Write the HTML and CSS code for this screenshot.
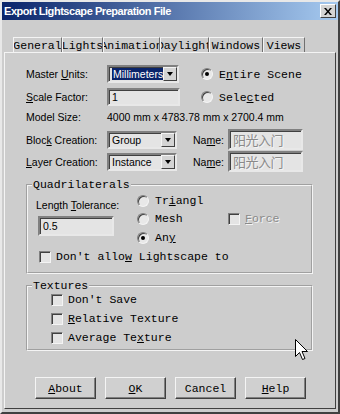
FILE: index.html
```html
<!DOCTYPE html>
<html lang="en">
<head>
    <meta charset="UTF-8">
    <meta name="viewport" content="width=device-width, initial-scale=1.0">
    <title>Export Lightscape Preparation File</title>
    <link rel="stylesheet" href="styles.css">
</head>
<body>
    <div class="window">
        <div class="titlebar">
            <span class="title">Export Lightscape Preparation File</span>
            <span class="close">
                <svg width="8" height="7" viewBox="0 0 8 7"><path d="M0 0h2l2 2.5L6 0h2L5 3.5 8 7H6L4 4.5 2 7H0l3-3.5z" fill="#000"/></svg>
            </span>
        </div>

        <div class="tabs">
            <div class="tab" style="width:49px">General</div>
            <div class="tab" style="width:41px">Lights</div>
            <div class="tab" style="width:57px">Animation</div>
            <div class="tab" style="width:49px">Daylight</div>
            <div class="tab" style="width:54px">Windows</div>
            <div class="tab" style="width:42px">Views</div>
        </div>

        <div class="panel">
            <div class="row r1">
                <span class="lbl">Master <u>U</u>nits:</span>
                <div class="combo w72">
                    <span class="val"><span class="hilite">Millimeters</span></span>
                    <span class="drop"></span>
                </div>
                <span class="radio on gap22"></span>
                <span class="mono">E<u>n</u>tire Scene</span>
            </div>
            <div class="row r2">
                <span class="lbl"><u>S</u>cale Factor:</span>
                <div class="field w73">1</div>
                <span class="radio gap21"></span>
                <span class="mono">Sele<u>c</u>ted</span>
            </div>
            <div class="row r3">
                <span class="lbl">Model Size:</span>
                <span class="sans">4000 mm x 4783.78 mm x 2700.4 mm</span>
            </div>
            <div class="row r4">
                <span class="lbl">Bloc<u>k</u> Creation:</span>
                <div class="combo w70">
                    <span class="val">Group</span>
                    <span class="drop"></span>
                </div>
                <span class="name-lbl">Na<u>m</u>e:</span>
                <div class="field name">阳光入门</div>
            </div>
            <div class="row r5">
                <span class="lbl"><u>L</u>ayer Creation:</span>
                <div class="combo w70">
                    <span class="val">Instance</span>
                    <span class="drop"></span>
                </div>
                <span class="name-lbl">Na<u>m</u>e:</span>
                <div class="field name">阳光入门</div>
            </div>

            <fieldset class="group quad">
                <legend class="mono">Quadrilaterals</legend>
                <div class="quad-body">
                    <span class="sans tol">Length <u>T</u>olerance:</span>
                    <div class="opt c2 ra"><span class="radio"></span><span class="mono">Tr<u>i</u>angl</span></div>
                    <div class="field tol-field">0.5</div>
                    <div class="opt c2 rb"><span class="radio"></span><span class="mono">Mesh</span></div>
                    <div class="opt c3 rb"><span class="check"></span><span class="mono disabled"><u>F</u>orce</span></div>
                    <div class="opt c2 rc"><span class="radio on"></span><span class="mono">An<u>y</u></span></div>
                    <div class="opt full rd"><span class="check"></span><span class="mono">Don't allo<u>w</u> Lightscape to</span></div>
                </div>
            </fieldset>

            <fieldset class="group tex">
                <legend class="mono">Textures</legend>
                <div class="tex-body">
                    <div class="opt"><span class="check"></span><span class="mono">Don't Save</span></div>
                    <div class="opt"><span class="check"></span><span class="mono"><u>R</u>elative Texture</span></div>
                    <div class="opt"><span class="check"></span><span class="mono">Average Te<u>x</u>ture</span></div>
                </div>
            </fieldset>

            <div class="buttons">
                <button class="btn"><u>A</u>bout</button>
                <button class="btn"><u>O</u>K</button>
                <button class="btn">Cancel</button>
                <button class="btn"><u>H</u>elp</button>
            </div>
        </div>

        <svg class="cursor" width="13" height="22" viewBox="0 0 13 22">
            <path d="M0.5 0.5v17l4-4 3 7 2.5-1-3-7h5.5z" fill="#fff" stroke="#000" stroke-width="1"/>
        </svg>
    </div>
</body>
</html>
```

FILE: styles.css
```css
body {
    margin: 0;
    background: #cdcdcd;
}
.window {
    position: relative;
    width: 340px;
    height: 414px;
    box-sizing: border-box;
    background: #cdcdcd;
    border: 2px solid;
    border-color: #e8e8e8 #404040 #404040 #e8e8e8;
    font-family: "Liberation Sans", Arial, sans-serif;
    color: #000;
}
.titlebar {
    height: 18px;
    display: flex;
    align-items: center;
    justify-content: space-between;
    padding: 0 2px 0 2px;
    background: linear-gradient(to right, #0a246a, #a6caf0);
}
.title {
    color: #fff;
    font-weight: bold;
    font-size: 11px;
    letter-spacing: -0.45px;
}
.close {
    width: 16px;
    height: 14px;
    box-sizing: border-box;
    display: flex;
    align-items: center;
    justify-content: center;
    background: #d4d4d4;
    border: 1px solid;
    border-color: #fff #404040 #404040 #fff;
}

.mono {
    font-family: "Liberation Mono", "DejaVu Sans Mono", monospace;
    font-size: 11.5px;
    white-space: nowrap;
}
.sans {
    font-size: 10.5px;
    white-space: nowrap;
}
u {text-decoration: underline; text-underline-offset: 1px;}

.tabs {
    display: flex;
    margin-top: 17px;
    padding-left: 11px;
    height: 15px;
}
.tab {
    height: 15px;
    box-sizing: border-box;
    display: flex;
    justify-content: center;
    align-items: center;
    overflow: hidden;
    white-space: nowrap;
    font-family: "Liberation Mono", "DejaVu Sans Mono", monospace;
    font-size: 11.5px;
    border-left: 1px solid #f4f4f4;
    border-top: 1px solid #f4f4f4;
    border-right: 1px solid #707070;
}

.panel {
    height: 357px;
    margin: 0 2px 0 2px;
    box-sizing: border-box;
    border: 1px solid;
    border-color: #f4f4f4 #404040 #404040 #f4f4f4;
    padding: 12px 0 0 21px;
}
.row {
    display: flex;
    align-items: center;
    height: 18px;
    font-size: 10.5px;
}
.r2 {margin-top: 5px;}
.r3 {margin-top: 2px;}
.r4 {margin-top: 3px; height: 21px;}
.r5 {margin-top: 1px; height: 21px;}
.lbl {
    width: 81px;
    flex: none;
    white-space: nowrap;
}

.combo, .field {
    box-sizing: border-box;
    height: 18px;
    border: 2px solid;
    border-color: #808080 #e8e8e8 #e8e8e8 #808080;
    box-shadow: inset 1px 1px 0 #404040;
    background: #e4e4e4;
    display: flex;
    align-items: center;
}
.w72 {width: 72px;}
.w73 {width: 73px;}
.w70 {width: 70px;}
.combo .val {
    flex: 1;
    padding-left: 3px;
    font-size: 10.5px;
    white-space: nowrap;
    overflow: hidden;
}
.hilite {
    background: #0a246a;
    color: #fff;
    padding: 1px 1px;
}
.drop {
    width: 14px;
    height: 14px;
    box-sizing: border-box;
    background: #d4d4d4;
    border: 1px solid;
    border-color: #f4f4f4 #404040 #404040 #f4f4f4;
    position: relative;
    margin-right: 0;
}
.drop::after {
    content: "";
    position: absolute;
    left: 3px;
    top: 4px;
    border-left: 3.5px solid transparent;
    border-right: 3.5px solid transparent;
    border-top: 4px solid #000;
}
.field {
    padding-left: 3px;
    font-size: 10.5px;
}
.name-lbl {
    margin-left: 16px;
    width: 35px;
}
.field.name {
    width: 75px;
    height: 21px;
    color: #8a8a8a;
    font-family: "Noto Sans CJK SC", sans-serif;
    font-size: 13px;
    text-shadow: 1px 1px 0 #f4f4f4;
    letter-spacing: -0.5px;
}

.radio {
    width: 12px;
    height: 12px;
    box-sizing: border-box;
    border-radius: 50%;
    border: 1px solid;
    border-color: #808080 #f4f4f4 #f4f4f4 #808080;
    background: #e8e8e8;
    box-shadow: inset 1px 1px 0 #404040;
    display: inline-flex;
    align-items: center;
    justify-content: center;
    margin-right: 6px;
    flex: none;
}
.radio.on::after {
    content: "";
    width: 4px;
    height: 4px;
    border-radius: 50%;
    background: #000;
}
.gap22 {margin-left: 22px;}
.gap21 {margin-left: 21px;}
.check {
    width: 12px;
    height: 12px;
    box-sizing: border-box;
    border: 1px solid;
    border-color: #808080 #f4f4f4 #f4f4f4 #808080;
    box-shadow: inset 1px 1px 0 #404040;
    background: #e4e4e4;
    margin-right: 5px;
    flex: none;
}
.disabled {
    color: #8a8a8a;
    text-shadow: 1px 1px 0 #f4f4f4;
}

.group {
    margin: 0;
    padding: 0;
    width: 287px;
    box-sizing: border-box;
    border: 2px groove #f4f4f4;
}
.group legend {
    margin-left: 4px;
    padding: 0 1px;
    line-height: 14px;
}
.quad {
    margin-top: 6px;
    height: 96px;
}
.quad-body {
    display: grid;
    grid-template-columns: 100px 92px auto;
    grid-template-rows: 17px 19px 19px 19px;
    padding-left: 8px;
}
.opt {
    display: flex;
    align-items: center;
}
.c2 {grid-column: 2;}
.c3 {grid-column: 3;}
.ra {grid-row: 1;}
.rb {grid-row: 2;}
.rc {grid-row: 3;}
.rd {grid-row: 4;}
.full {grid-column: 1 / 4; padding-left: 3px;}
.tol {
    grid-column: 1;
    grid-row: 1;
    align-self: end;
    margin-bottom: -2px;
}
.tol-field {
    grid-column: 1;
    grid-row: 2 / 4;
    align-self: center;
    width: 76px;
    height: 20px;
    margin-left: 2px;
    margin-top: -4px;
}
.quad .radio {margin-left: 1px;}

.tex {
    margin-top: 5px;
    height: 72px;
}
.tex-body {
    margin-top: -3px;
    padding-left: 23px;
}
.tex-body .opt {height: 19px;}

.buttons {
    display: flex;
    gap: 9px;
    margin-top: 26px;
    padding-left: 9px;
}
.btn {
    width: 61px;
    height: 22px;
    padding: 0;
    font-family: "Liberation Mono", "DejaVu Sans Mono", monospace;
    font-size: 11.5px;
    color: #000;
    background: #d0d0d0;
    border: 1px solid;
    border-color: #f4f4f4 #404040 #404040 #f4f4f4;
    box-shadow: inset -1px -1px 0 #808080;
}

.cursor {
    position: absolute;
    left: 293px;
    top: 337px;
}
```
